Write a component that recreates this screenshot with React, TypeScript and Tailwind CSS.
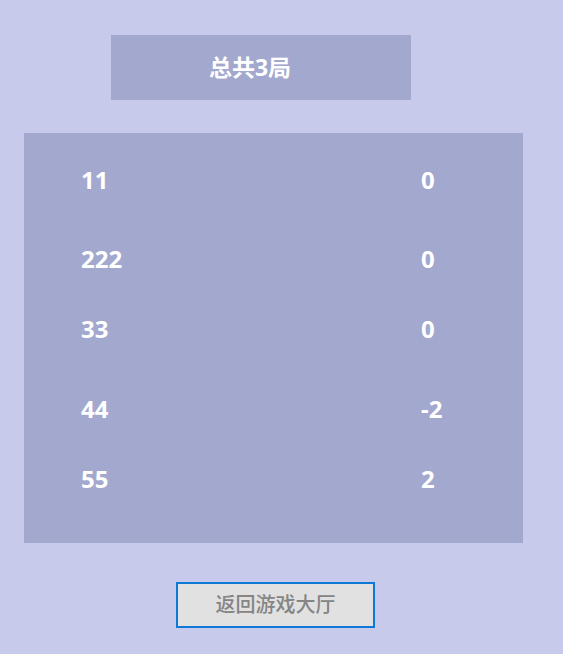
const rows: { name: string; score: string; mt: string }[] = [
  { name: "11", score: "0", mt: "mt-[33px]" },
  { name: "222", score: "0", mt: "mt-[51px]" },
  { name: "33", score: "0", mt: "mt-[42px]" },
  { name: "44", score: "-2", mt: "mt-[52px]" },
  { name: "55", score: "2", mt: "mt-[42px]" },
];

export default function App() {
  return (
    <main
      className="flex h-[654px] w-full flex-col items-start bg-[#c8caec]"
      style={{ fontFamily: '"Noto Sans", "Noto Sans CJK SC", sans-serif' }}
    >
      {/* Header */}
      <div className="ml-[111px] mt-[35px] flex h-[65px] w-[300px] items-center justify-center bg-[#a2a8ce] pr-[22px] text-[23px] font-bold text-white">
        总共3局
      </div>

      {/* Scores */}
      <section className="ml-[24px] mt-[33px] h-[410px] w-[499px] bg-[#a2a8ce] pl-[57px]">
        {rows.map((r) => (
          <div
            key={r.name}
            className={`${r.mt} flex h-[28px] items-center text-[24px] font-bold leading-none text-white`}
          >
            <div className="w-[340px]">{r.name}</div>
            <div>{r.score}</div>
          </div>
        ))}
      </section>

      <button
        type="button"
        className="ml-[176px] mt-[39px] flex h-[46px] w-[199px] items-center justify-center border-2 border-[#0f78d4] bg-[#e1e1e1] text-[20px] font-medium text-[#858585]"
      >
        返回游戏大厅
      </button>
    </main>
  );
}
